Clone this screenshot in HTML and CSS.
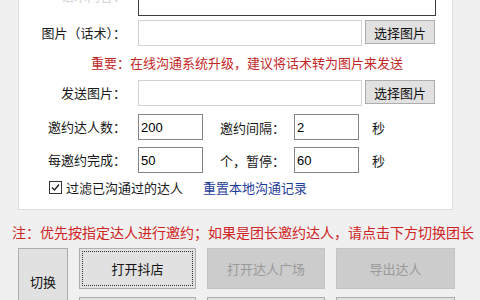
FILE: index.html
```html
<!DOCTYPE html>
<html>
<head>
    <title>邀约设置</title>
    <link rel="stylesheet" href="styles.css">
</head>
<body>
    <div class="panel">
        <div class="row row-script">
            <label class="lbl faded">话术内容：</label>
            <textarea class="script-box"></textarea>
        </div>
        <div class="row row-file">
            <label class="lbl">图片（话术）：</label>
            <input type="text" class="path">
            <button type="button" class="pick">选择图片</button>
        </div>
        <div class="warn">重要：在线沟通系统升级，建议将话术转为图片来发送</div>
        <div class="row row-file2">
            <label class="lbl">发送图片：</label>
            <input type="text" class="path">
            <button type="button" class="pick">选择图片</button>
        </div>
        <div class="row row-num first">
            <label class="lbl">邀约达人数：</label>
            <input type="text" class="num" value="200">
            <label class="lbl2">邀约间隔：</label>
            <input type="text" class="num" value="2">
            <span class="unit">秒</span>
        </div>
        <div class="row row-num">
            <label class="lbl">每邀约完成：</label>
            <input type="text" class="num" value="50">
            <label class="lbl2">个，暂停：</label>
            <input type="text" class="num" value="60">
            <span class="unit">秒</span>
        </div>
        <div class="row row-check">
            <span class="check">
                <svg width="11" height="11" viewBox="0 0 11 11"><path d="M2 5.5 L4.5 8 L9 2.5" fill="none" stroke="#222" stroke-width="1.4"/></svg>
            </span>
            <span class="check-text">过滤已沟通过的达人</span>
            <a href="#" class="reset">重置本地沟通记录</a>
        </div>
    </div>

    <div class="note">注：优先按指定达人进行邀约；如果是团长邀约达人，请点击下方切换团长</div>

    <div class="actions">
        <button type="button" class="btn switch">切换</button>
        <button type="button" class="btn focus">打开抖店</button>
        <button type="button" class="btn off">打开达人广场</button>
        <button type="button" class="btn off">导出达人</button>
        <!-- second row is below the fold -->
        <button type="button" class="btn"></button>
        <button type="button" class="btn"></button>
        <button type="button" class="btn"></button>
    </div>
</body>
</html>
```

FILE: styles.css
```css
body { margin: 0; background: #f0f0f0; font-family: "Noto Sans CJK SC", "Noto Sans", sans-serif; font-size: 13px; color: #1a1a1a; overflow: hidden; }

.panel { margin: -40px 0 0 18px; width: 433px; background: #fff; border: 1px solid #dedede; padding-bottom: 8px; }
.row { display: flex; align-items: center; }
.lbl { width: 107px; text-align: right; line-height: 16px; margin-right: 12px; white-space: nowrap; }
.faded { color: #d4d4d4; }

.row-script { height: 55px; align-items: flex-end; }
.row-script .lbl { padding-bottom: 12px; }
.script-box { width: 298px; height: 55px; box-sizing: border-box; border: 1px solid #3c3c3c; resize: none; margin: 0; }

.row-file { margin-top: 4px; align-items: flex-start; }
.row-file2 { align-items: flex-start; }
.row-file .lbl, .row-file2 .lbl { line-height: 26px; }
.path { width: 224px; height: 26px; box-sizing: border-box; border: 1px solid #d2d2d2; margin: 0; padding: 0 3px; }
.pick { width: 70px; height: 24px; margin-left: 3px; background: #e1e1e1; border: 1px solid #adadad; font-family: inherit; font-size: 13px; color: #111; padding: 0; }

.warn { height: 34px; line-height: 34px; padding-left: 72px; color: #c42727; white-space: nowrap; }

.row-num { margin-top: 7px; }
.row-num.first { margin-top: 8px; }
.num { width: 65px; height: 26px; box-sizing: border-box; border: 1px solid #858585; margin: 0; padding: 0 2px; font-family: "Liberation Sans", sans-serif; font-size: 13px; }
.lbl2 { width: 82px; text-align: right; margin-right: 9px; white-space: nowrap; }
.unit { margin-left: 13px; }

.row-check { height: 28px; padding-left: 30px; }
.check { width: 11px; height: 11px; border: 1px solid #333; display: flex; }
.check-text { margin-left: 4px; }
.reset { margin-left: 20px; color: #1f3c99; text-decoration: none; }

.note { color: #d02424; font-size: 14px; line-height: 20px; margin-top: 12px; padding-left: 12px; white-space: nowrap; }

.actions { display: grid; grid-template-columns: 50px 117px 118px 119px; column-gap: 11px; row-gap: 8px; margin: 6px 0 0 18px; }
.btn { height: 41px; background: #e1e1e1; border: 1px solid #adadad; font-family: inherit; font-size: 13px; color: #111; padding: 0; }
.switch { grid-row: span 2; height: 66px; align-self: start; }
.focus { outline: 1px dotted #333; outline-offset: -4px; }
.off { background: #cccccc; border-color: #c4c4c4; color: #9a9a9a; }
```
